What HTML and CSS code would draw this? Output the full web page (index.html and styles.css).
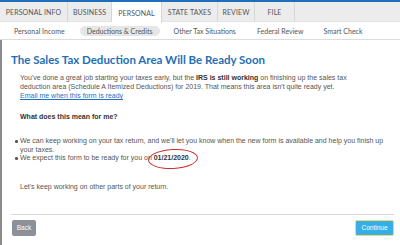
FILE: index.html
```html
<!DOCTYPE html>
<html>
<head>
<meta charset="utf-8">
<link rel="stylesheet" href="styles.css">
</head>
<body>
<div class="topstrip"></div>
<nav class="tabs">
  <div class="tab t1">PERSONAL INFO</div>
  <div class="tab t2">BUSINESS</div>
  <div class="tab t3 active">PERSONAL</div>
  <div class="tab t4">STATE TAXES</div>
  <div class="tab t5">REVIEW</div>
  <div class="tab t6">FILE</div>
</nav>
<nav class="subnav">
  <div class="sub s1">Personal Income</div>
  <div class="sub s2 pill">Deductions &amp; Credits</div>
  <div class="sub s3">Other Tax Situations</div>
  <div class="sub s4">Federal Review</div>
  <div class="sub s5">Smart Check</div>
</nav>
<main class="content">
  <h1 class="title">The Sales Tax Deduction Area Will Be Ready Soon</h1>
  <p class="intro">You've done a great job starting your taxes early, but the <b>IRS is still working</b> on finishing up the sales tax deduction area (Schedule A Itemized Deductions) for 2019. That means this area isn't quite ready yet.<br><a class="link" href="#">Email me when this form is ready</a></p>
  <h2 class="sub-h">What does this mean for me?</h2>
  <ul class="bullets">
    <li>We can keep working on your tax return, and we'll let you know when the new form is available and help you finish up your taxes.</li>
    <li>We expect this form to be ready for you on <span class="date"><b>01/21/2020</b><span class="circle"></span></span>.</li>
  </ul>
  <p class="closing">Let's keep working on other parts of your return.</p>
  <div class="footer">
    <button class="btn back">Back</button>
    <button class="btn cont">Continue</button>
  </div>
</main>
</body>
</html>
```
FILE: styles.css
```css
* { box-sizing: border-box; }
html, body { margin: 0; padding: 0; background: #fff; width: 400px; height: 245px; overflow: hidden; }
body { font-family: "Liberation Sans", Arial, sans-serif; color: #555; }
.topstrip { height: 2px; background: #1d6fb8; }
.tabs { display: flex; height: 20px; background: #ececec; border-bottom: 1px solid #e2e2e2; font-family: Lato, "Open Sans", sans-serif; font-size: 7px; color: #555; }
.tab { display: flex; align-items: center; justify-content: center; border-right: 1px solid #d6d6d6; letter-spacing: 0.1px; }
.t1 { width: 68px; }
.t2 { width: 44px; }
.t3 { width: 50px; }
.t4 { width: 56px; }
.t5 { width: 37px; }
.t6 { width: 40px; }
.tab.active { background: #fff; height: 21px; }
.subnav { display: flex; align-items: center; height: 18px; border-bottom: 1px solid #dcdcdc; font-family: Lato, "Open Sans", sans-serif; font-size: 7px; color: #555; padding-left: 14px; }
.sub { white-space: nowrap; }
.pill { background: #e6e6e6; border-radius: 6px; padding: 1px 0; width: 80px; text-align: center; margin-left: 15px; }
.s3 { margin-left: 14px; }
.s4 { margin-left: 21px; }
.s5 { margin-left: 20px; }
.content { border-left: 2px solid #8c8c8c; height: 205px; padding: 0 7px 0 9px; }
.title { margin: 0; padding-top: 12px; font-family: Lato, "Open Sans", sans-serif; font-weight: 700; font-size: 11.5px; line-height: 16px; color: #1f6fb6; letter-spacing: 0; }
.intro { margin: 5px 0 0 9px; width: 352px; font-size: 7px; line-height: 9px; color: #555; }
.intro b { color: #333; }
.link { color: #1a72c6; text-decoration: underline; }
.sub-h { margin: 12px 0 0 9px; font-size: 7px; font-weight: 700; color: #333; line-height: 9px; }
.bullets { margin: 16px 0 0 9px; padding: 0; font-size: 7px; line-height: 8.5px; list-style: none; }
.bullets li { position: relative; }
.bullets li::before { content: ""; position: absolute; left: -5px; top: 3px; width: 2.5px; height: 2.5px; background: #555; border-radius: 50%; }
.date { position: relative; color: #333; }
.circle { position: absolute; left: -6px; top: -5px; width: 50px; height: 20px; border: 1.5px solid #c9302c; border-radius: 50%; transform: rotate(-3deg); }
.closing { margin: 19px 0 0 9px; font-size: 7px; line-height: 9px; }
.footer { display: flex; justify-content: space-between; align-items: center; margin-top: 23px; border-top: 1px solid #d8d8d8; padding: 5px 0 0 1px; width: 383px; }
.btn { border: none; font-family: "Liberation Sans", Arial, sans-serif; font-size: 6.5px; color: #fff; border-radius: 2px; height: 16px; padding: 0; }
.back { background: #8d9096; width: 24px; }
.cont { background: #37aeea; width: 39px; border: 1px solid #e8df64; }
```
